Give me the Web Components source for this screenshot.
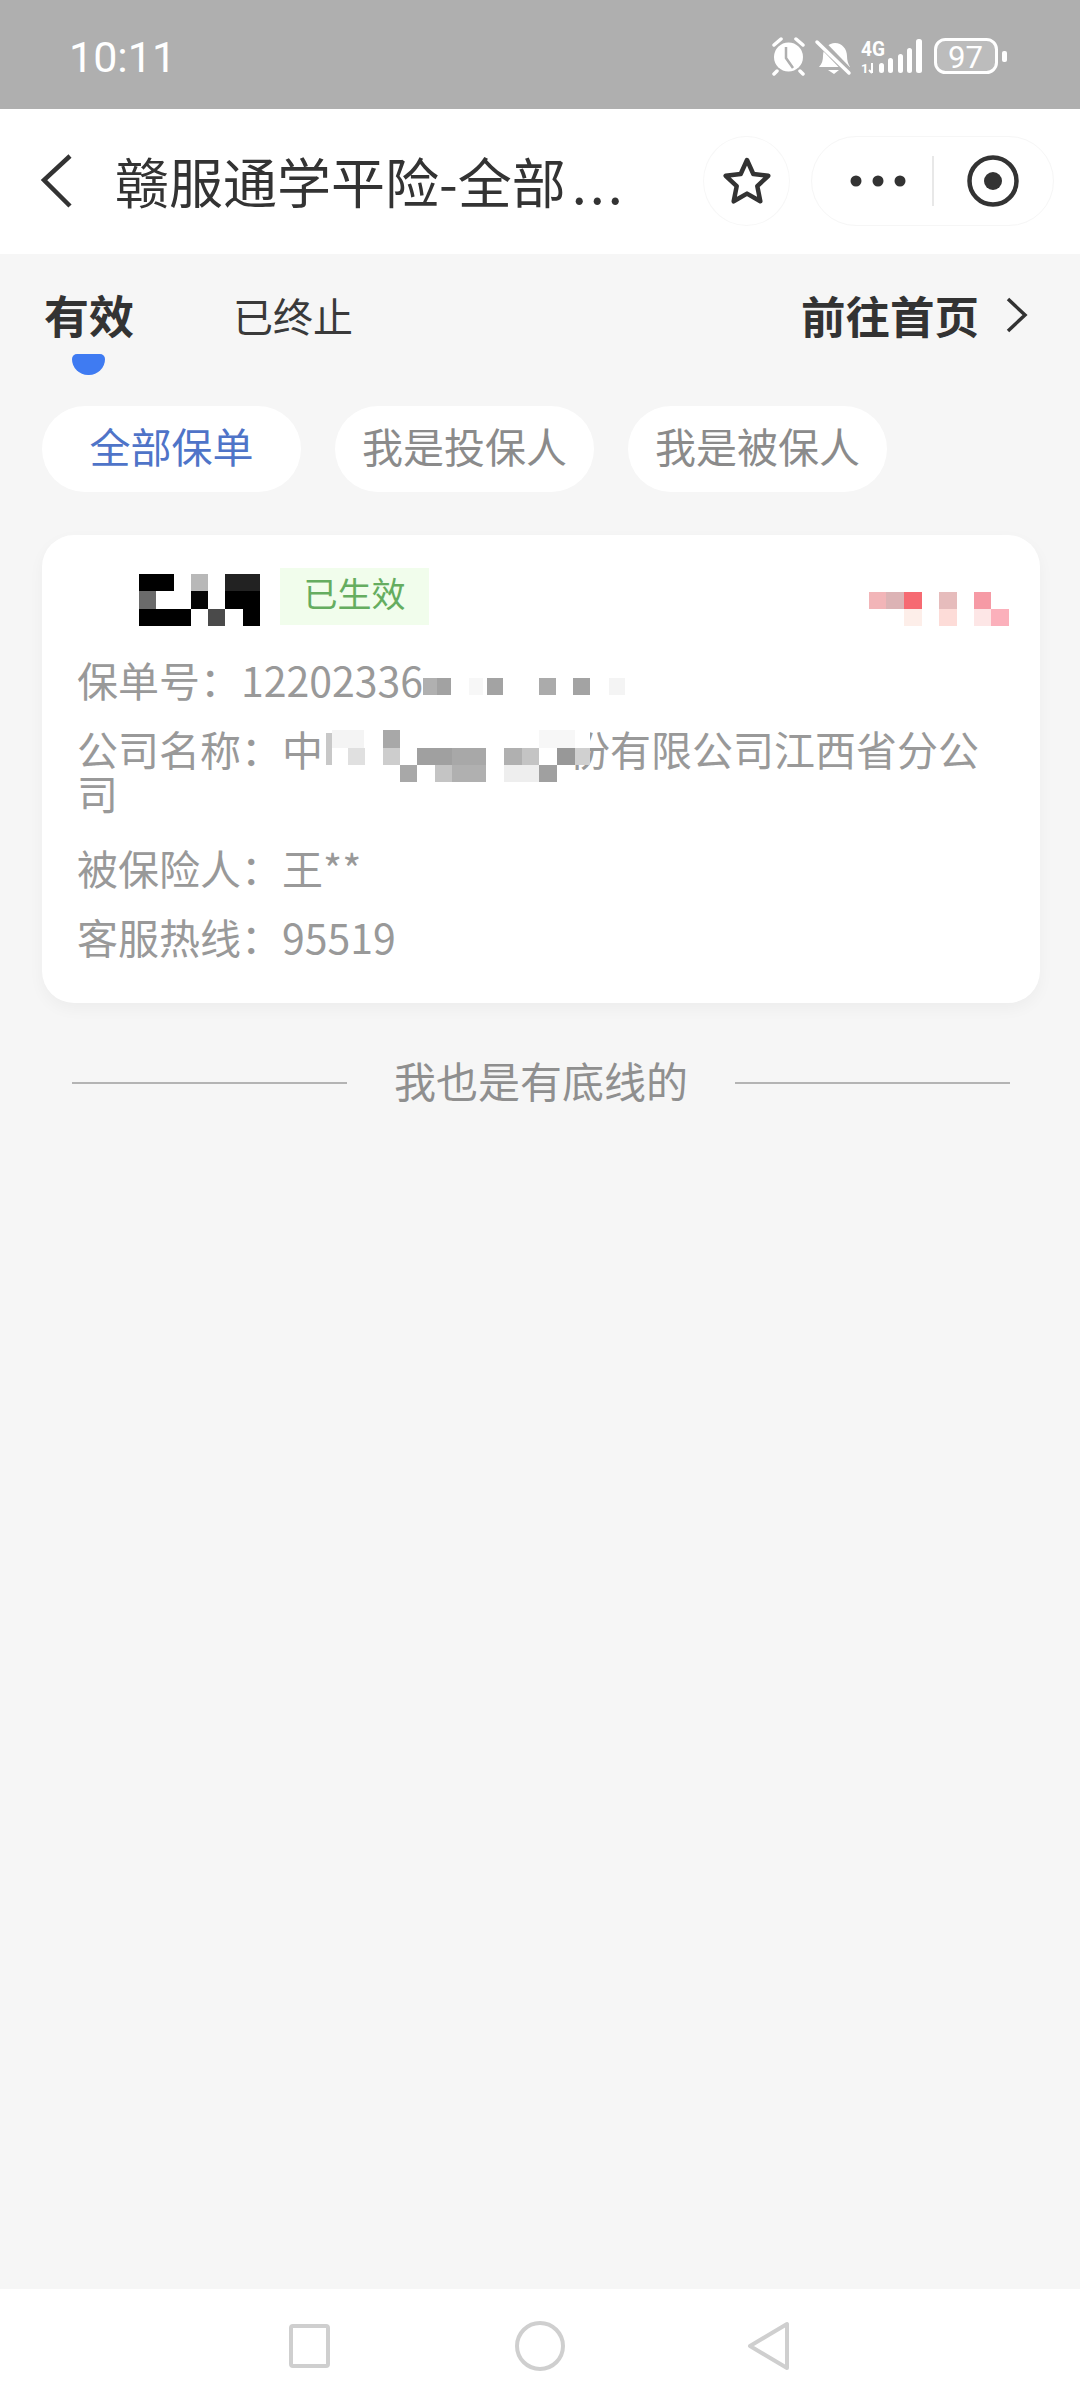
<!DOCTYPE html>
<html lang="zh-CN">
<head>
<meta charset="utf-8">
<style>
  html, body { margin: 0; padding: 0; }
  body {
    width: 1080px;
    height: 2403px;
    overflow: hidden;
    background: #f6f6f6;
    font-family: "Noto Sans CJK SC", "Noto Sans", sans-serif;
    display: flex;
    flex-direction: column;
  }
</style>
</head>
<body>
<status-bar></status-bar>
<nav-bar>赣服通学平险-全部<span style="letter-spacing:3px;margin-left:6px">...</span></nav-bar>
<policy-tabs></policy-tabs>
<filter-chips></filter-chips>
<policy-card></policy-card>
<end-line>我也是有底线的</end-line>
<soft-keys></soft-keys>

<script>
class StatusBar extends HTMLElement {
    constructor() {
        super();
        this.shadowDOM = this.attachShadow({ mode: "open" });
    }

    connectedCallback() {
        this.shadowDOM.innerHTML = `
        <style>
        :host {
          display: flex;
          flex: none;
          height: 109px;
          background: #afafaf;
          color: #fff;
          align-items: center;
          justify-content: space-between;
          padding: 0 73px 0 69px;
          box-sizing: border-box;
        }
        .time { font: 43px/1 Roboto, sans-serif; margin-top: 6px; }
        .icons { display: block; margin-top: 2px; }
        text { font-family: Roboto, sans-serif; fill: #fff; }
        </style>
        <span class="time">10:11</span>
        <svg class="icons" width="236" height="40" viewBox="0 0 236 40">
          <!-- alarm -->
          <circle cx="17.5" cy="21" r="14.5" fill="#fff"/>
          <path d="M15 11v11l7 10" stroke="#afafaf" stroke-width="2.5" fill="none"/>
          <path d="M3 9l7-6M32 9l-7-6M6 35l-3 3M29 35l3 3" stroke="#fff" stroke-width="3.5" stroke-linecap="round"/>
          <!-- muted bell -->
          <path d="M48 31c3-3 4-7 4-11 0-8 6-13 12-13 7 0 12 6 12 13 0 4 1 8 3 11z" fill="#fff"/>
          <path d="M47 4l30 31" stroke="#afafaf" stroke-width="8"/>
          <path d="M46 6l32 31" stroke="#fff" stroke-width="3.5" stroke-linecap="round"/>
          <path d="M57 34h11l-5 4z" fill="#fff"/>
          <!-- 4G + signal -->
          <text x="90" y="20" font-size="20" font-weight="700" textLength="24" lengthAdjust="spacingAndGlyphs">4G</text>
          <text x="90" y="37" font-size="13" font-weight="700">1</text>
          <path d="M101 27v10M98 34l3 3" stroke="#fff" stroke-width="2" fill="none"/>
          <rect x="108" y="27" width="5" height="10" rx="2.5" fill="#fff"/>
          <rect x="117" y="22" width="5" height="15" rx="2.5" fill="#fff"/>
          <rect x="127" y="18" width="5" height="19" rx="2.5" fill="#fff"/>
          <rect x="136" y="12" width="5" height="25" rx="2.5" fill="#fff"/>
          <rect x="145" y="3" width="6" height="34" rx="2.5" fill="#fff"/>
          <!-- battery -->
          <rect x="164.5" y="3.5" width="61" height="33" rx="10" fill="#bcbcbc" stroke="#fff" stroke-width="3"/>
          <rect x="231" y="15" width="5" height="11" rx="2" fill="#fff"/>
          <text x="177" y="32" font-size="32" textLength="35" lengthAdjust="spacingAndGlyphs">97</text>
        </svg>
      `;
    }
}

class NavBar extends HTMLElement {
    constructor() {
        super();
        this.shadowDOM = this.attachShadow({ mode: "open" });
    }

    connectedCallback() {
        this.shadowDOM.innerHTML = `
        <style>
        :host {
          display: flex;
          flex: none;
          height: 145px;
          background: #fff;
          align-items: center;
          box-sizing: border-box;
          padding: 0 25px 2px 38px;
          color: #333;
        }
        .back { flex: none; margin-right: 41px; }
        .title {
          flex: none;
          width: 510px;
          font-size: 54px;
          line-height: 64px;
          white-space: nowrap;
          overflow: hidden;
        }
        .star {
          flex: none;
          width: 87px;
          height: 90px;
          margin-left: 78px;
          border: 1px solid #f7f7f7;
          border-radius: 50%;
          display: flex;
          align-items: center;
          justify-content: center;
          box-sizing: border-box;
        }
        .capsule {
          flex: none;
          width: 243px;
          height: 90px;
          margin-left: 21px;
          border: 1px solid #f6f6f6;
          border-radius: 45px;
          display: flex;
          align-items: center;
          box-sizing: border-box;
        }
        .more { flex: none; margin-left: 38px; }
        .sep { flex: none; width: 2px; height: 50px; background: #e8e8e8; margin: 0 32px 0 26px; }
        </style>
        <svg class="back" width="36" height="54" viewBox="0 0 36 54">
          <path d="M32 2 6 26l26 26" fill="none" stroke="#333" stroke-width="4.5"/>
        </svg>
        <div class="title"><slot></slot></div>
        <div class="star">
          <svg width="50" height="50" viewBox="0 0 50 50">
            <path d="M25 4l6.3 14 15 1.8-11 10.3 3 15.2L25 37.6l-13.3 7.7 3-15.2-11-10.3 15-1.8z" fill="none" stroke="#333" stroke-width="4.5" stroke-linejoin="round"/>
          </svg>
        </div>
        <div class="capsule">
          <svg class="more" width="56" height="14" viewBox="0 0 56 14">
            <circle cx="6" cy="7" r="5.5" fill="#333"/>
            <circle cx="28" cy="7" r="5.5" fill="#333"/>
            <circle cx="50" cy="7" r="5.5" fill="#333"/>
          </svg>
          <span class="sep"></span>
          <svg width="54" height="54" viewBox="0 0 54 54">
            <circle cx="27" cy="27" r="23.5" fill="none" stroke="#333" stroke-width="4.5"/>
            <circle cx="27" cy="27" r="9" fill="#333"/>
          </svg>
        </div>
      `;
    }
}

class PolicyTabs extends HTMLElement {
    constructor() {
        super();
        this.shadowDOM = this.attachShadow({ mode: "open" });
    }

    connectedCallback() {
        this.shadowDOM.innerHTML = `
        <style>
        :host {
          display: flex;
          flex: none;
          height: 152px;
          box-sizing: border-box;
          padding: 33px 50px 0 44px;
          color: #333;
        }
        .tab { line-height: 56px; }
        .active { font-size: 45px; font-weight: 700; width: 189px; position: relative; }
        .active::after {
          content: "";
          position: absolute;
          left: 28px;
          top: 67px;
          width: 33px;
          height: 21px;
          background: #3f7bf2;
          border-radius: 5px 5px 16px 16px;
        }
        .other { font-size: 40px; color: #3a3a3a; }
        .home {
          margin-left: auto;
          display: flex;
          align-items: center;
          gap: 27px;
          height: 56px;
          font-size: 44.5px;
          font-weight: 700;
          line-height: 56px;
        }
        </style>
        <span class="tab active">有效</span>
        <span class="tab other">已终止</span>
        <span class="home">前往首页
          <svg width="24" height="38" viewBox="0 0 24 38">
            <path d="M2 3l17 16L2 35" fill="none" stroke="#333" stroke-width="3.5"/>
          </svg>
        </span>
      `;
    }
}

class FilterChips extends HTMLElement {
    constructor() {
        super();
        this.shadowDOM = this.attachShadow({ mode: "open" });
    }

    connectedCallback() {
        this.shadowDOM.innerHTML = `
        <style>
        :host {
          display: flex;
          flex: none;
          gap: 34px;
          padding: 0 0 0 42px;
          height: 86px;
        }
        span {
          flex: none;
          width: 259px;
          height: 86px;
          box-sizing: border-box;
          padding-bottom: 8px;
          border-radius: 43px;
          background: #fff;
          color: #8b8b8b;
          font-size: 41px;
          display: flex;
          align-items: center;
          justify-content: center;
        }
        .on { color: #4f74c8; }
        </style>
        <span class="on">全部保单</span>
        <span>我是投保人</span>
        <span>我是被保人</span>
      `;
    }
}

class PolicyCard extends HTMLElement {
    constructor() {
        super();
        this.shadowDOM = this.attachShadow({ mode: "open" });
    }

    connectedCallback() {
        this.shadowDOM.innerHTML = `
        <style>
        :host {
          display: block;
          flex: none;
          box-sizing: border-box;
          width: 998px;
          height: 468px;
          margin: 43px 0 0 42px;
          padding: 30px 46px 0 35px;
          background: #fff;
          border-radius: 32px;
          box-shadow: 0 6px 16px rgba(0, 0, 0, 0.04);
          color: #999;
          font-size: 41px;
          line-height: 44px;
          position: relative;
        }
        .head { display: flex; align-items: center; height: 62px; }
        .logo { flex: none; margin: 8px 0 0 62px; display: block; }
        .tag {
          flex: none;
          box-sizing: border-box;
          margin-left: 20px;
          width: 149px;
          height: 57px;
          padding-bottom: 8px;
          background: #f1fdec;
          color: #65ad60;
          font-size: 34px;
          line-height: 49px;
          text-align: center;
        }
        .corner { position: absolute; right: 31px; top: 57px; display: block; }
        .row { margin-top: 25px; }
        .row.first { margin-top: 30px; }
        .row.person { margin-top: 25px; }
        .row.company { position: relative; }
        .row.company + .row.person { margin-top: 31px; }
        .mosaic { vertical-align: top; overflow: visible; }
        .mosaic.name { position: absolute; left: 247px; top: 0; }
        svg rect, svg path { shape-rendering: crispEdges; }
        </style>
        <div class="head">
          <svg class="logo" width="121" height="54" viewBox="0 0 7 3">
            <rect x="0" y="0" width="2" height="1" fill="#000"/>
            <rect x="3" y="0" width="1" height="1" fill="#b8b8b8"/>
            <rect x="5" y="0" width="2" height="1" fill="#222"/>
            <rect x="0" y="1" width="1" height="1" fill="#6b6b6b"/>
            <rect x="3" y="1" width="1" height="1" fill="#050505"/>
            <rect x="5" y="1" width="2" height="1" fill="#000"/>
            <rect x="0" y="2" width="3" height="1" fill="#000"/>
            <rect x="4" y="2" width="1" height="1" fill="#4a4a4a"/>
            <rect x="6" y="2" width="1" height="1" fill="#000"/>
          </svg>
          <span class="tag">已生效</span>
        </div>
        <svg class="corner" width="140" height="34" viewBox="0 0 140 34">
          <rect x="0" y="0" width="17" height="17" fill="#f2b5b8"/>
          <rect x="17" y="0" width="18" height="17" fill="#dcb3b5"/>
          <rect x="35" y="0" width="18" height="17" fill="#f66a72"/>
          <rect x="70" y="0" width="18" height="17" fill="#e6bcbc"/>
          <rect x="105" y="0" width="17" height="17" fill="#f69aa5"/>
          <rect x="35" y="17" width="18" height="17" fill="#fdeee9"/>
          <rect x="70" y="17" width="18" height="17" fill="#fddcd8"/>
          <rect x="105" y="17" width="17" height="17" fill="#fde6e6"/>
          <rect x="122" y="17" width="18" height="17" fill="#fbb0bb"/>
        </svg>
        <div class="row first">保单号：12202336<svg class="mosaic" width="202" height="44" viewBox="0 0 202 44">
            <rect x="0" y="21" width="14" height="17" fill="#b0b0b0"/>
            <rect x="14" y="21" width="14" height="17" fill="#a2a2a2"/>
            <rect x="46" y="21" width="14" height="17" fill="#f7f7f7"/>
            <rect x="64" y="21" width="16" height="17" fill="#a3a3a3"/>
            <rect x="116" y="21" width="17" height="17" fill="#ababab"/>
            <rect x="150" y="21" width="17" height="17" fill="#a3a3a3"/>
            <rect x="186" y="21" width="16" height="17" fill="#f4f4f4"/>
          </svg></div>
        <div class="row company">公司名称：中　　　　　　份有限公司江西省分公司<svg class="mosaic name" width="266" height="44" viewBox="0 0 266 44">
            <rect x="2" y="7" width="6" height="32" fill="#c8c8c8"/>
            <rect x="8" y="4" width="32" height="18" fill="#f4f4f4"/>
            <rect x="24" y="22" width="17" height="17" fill="#e0e0e0"/>
            <rect x="59" y="4" width="17" height="18" fill="#a8a8a8"/>
            <rect x="59" y="22" width="17" height="17" fill="#cdcdcd"/>
            <rect x="76" y="39" width="17" height="17" fill="#a8a8a8"/>
            <rect x="93" y="22" width="35" height="17" fill="#a0a0a0"/>
            <rect x="128" y="22" width="34" height="17" fill="#a8a8a8"/>
            <rect x="111" y="39" width="17" height="17" fill="#c4c4c4"/>
            <rect x="128" y="39" width="34" height="17" fill="#b0b0b0"/>
            <rect x="180" y="22" width="18" height="17" fill="#b0b0b0"/>
            <rect x="198" y="22" width="17" height="17" fill="#c4c4c4"/>
            <rect x="180" y="39" width="35" height="17" fill="#eeeeee"/>
            <rect x="215" y="39" width="18" height="17" fill="#a0a0a0"/>
            <rect x="215" y="4" width="36" height="18" fill="#f7f7f7"/>
            <rect x="233" y="22" width="18" height="17" fill="#989898"/>
            <rect x="251" y="0" width="15" height="22" fill="#fff"/>
            <rect x="251" y="22" width="15" height="17" fill="#d0d0d0"/>
          </svg></div>
        <div class="row person">被保险人：王**</div>
        <div class="row person">客服热线：95519</div>
      `;
    }
}

class EndLine extends HTMLElement {
    constructor() {
        super();
        this.shadowDOM = this.attachShadow({ mode: "open" });
    }

    connectedCallback() {
        this.shadowDOM.innerHTML = `
        <style>
        :host {
          display: flex;
          flex: none;
          align-items: center;
          height: 60px;
          margin: 50px 70px 0 72px;
          color: #8f8f8f;
          font-size: 42px;
          line-height: 52px;
        }
        i { flex: 1; height: 2px; background: #b4b4b4; }
        span { flex: none; margin: 0 47px 0 47px; padding-bottom: 6px; }
        </style>
        <i></i><span><slot></slot></span><i></i>
      `;
    }
}

class SoftKeys extends HTMLElement {
    constructor() {
        super();
        this.shadowDOM = this.attachShadow({ mode: "open" });
    }

    connectedCallback() {
        this.shadowDOM.innerHTML = `
        <style>
        :host {
          display: flex;
          flex: none;
          margin-top: auto;
          height: 114px;
          background: #fff;
          align-items: center;
          box-sizing: border-box;
          padding: 0 0 0 288px;
        }
        svg { flex: none; display: block; }
        </style>
        <svg width="44" height="50" viewBox="0 0 44 50" style="margin-right:183px">
          <rect x="3" y="5" width="37" height="40" rx="2" fill="none" stroke="#cfcfcf" stroke-width="4"/>
        </svg>
        <svg width="50" height="50" viewBox="0 0 50 50" style="margin-right:179px">
          <ellipse cx="25" cy="25" rx="23" ry="23" fill="none" stroke="#cfcfcf" stroke-width="4"/>
        </svg>
        <svg width="48" height="50" viewBox="0 0 48 50">
          <path d="M43 3v44L6 25z" fill="none" stroke="#cfcfcf" stroke-width="4" stroke-linejoin="round"/>
        </svg>
      `;
    }
}

customElements.define("status-bar", StatusBar);
customElements.define("nav-bar", NavBar);
customElements.define("policy-tabs", PolicyTabs);
customElements.define("filter-chips", FilterChips);
customElements.define("policy-card", PolicyCard);
customElements.define("end-line", EndLine);
customElements.define("soft-keys", SoftKeys);
</script>
</body>
</html>
